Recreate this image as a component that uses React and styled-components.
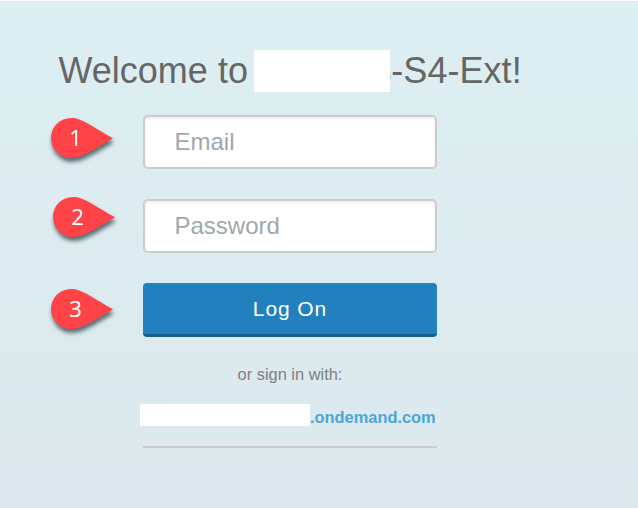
import React from "react";
import styled, { createGlobalStyle } from "styled-components";

const GlobalStyle = createGlobalStyle`
  * { box-sizing: border-box; }
  body { margin: 0; font-family: "Liberation Sans", Arial, sans-serif; }
`;

const Page = styled.main`
  height: 508px;
  overflow: hidden;
  border-top: 1px solid #fff;
  background: linear-gradient(#dceff2, #dce8ed);
`;

const Title = styled.h1`
  display: flex;
  align-items: center;
  height: 42px;
  margin: 49px 0 0 58.5px;
  font-size: 36px;
  font-weight: 400;
  line-height: 42px;
  color: #666;
  white-space: pre;
`;

const Redaction = styled.span`
  flex: none;
  width: ${({ $width }) => $width}px;
  height: ${({ $height }) => $height}px;
  background: #fff;
`;

const TitleRedaction = styled(Redaction)`
  margin: 0 0 0 6.4px;
`;

const HiddenNameEdge = styled.span`
  width: 1px;
  height: 4px;
  margin-top: 12px;
  background: #9bc9e8;
`;

const TitleSuffix = styled.span`
  letter-spacing: 0.05px;
`;

const Form = styled.form`
  display: flex;
  flex-direction: column;
  gap: 30px;
  margin-top: 23px;
`;

const FormRow = styled.div`
  display: grid;
  grid-template-columns: 143px 294px;
  height: 54px;
`;

const Marker = styled.svg`
  display: block;
  width: 76px;
  height: 54px;
  margin: ${({ $top }) => $top}px 0 0 ${({ $left }) => $left}px;
  overflow: visible;
  filter: drop-shadow(1px 4px 2px rgba(20, 40, 45, 0.65));
`;

const MarkerLabel = styled.text`
  font: 22px "Open Sans", "Noto Sans", sans-serif;
  fill: #fff;
  stroke: #fff;
  stroke-width: 0.2px;
  text-anchor: middle;
`;

const Field = styled.input`
  width: 100%;
  height: 54px;
  padding: 0 29.5px;
  border: 2px solid #ccc;
  border-radius: 5px;
  outline: 0;
  background: #fff;
  box-shadow: inset 0 2px 3px rgba(0, 0, 0, 0.07);
  font: 24px "Liberation Sans", Arial, sans-serif;
  &::placeholder { color: #a0a8ab; opacity: 1; }
`;

const LogOnButton = styled.button`
  height: 54px;
  padding: 0;
  border: 0;
  border-bottom: 3px solid #1b608c;
  border-radius: 4px;
  background: #2380be;
  color: #fff;
  font: 21px "Liberation Sans", Arial, sans-serif;
  letter-spacing: 0.9px;
`;

const SignInOptions = styled.section`
  width: 297px;
  margin: 27px 0 0 140px;
`;

const Hint = styled.p`
  width: 294px;
  margin: 0 0 0 3px;
  font-size: 16.4px;
  line-height: 20px;
  text-align: center;
  color: #808080;
`;

const Provider = styled.a`
  display: flex;
  height: 22px;
  margin-top: 20px;
  font-size: 16.4px;
  font-weight: 700;
  line-height: 27px;
  color: #4ba6d8;
  text-decoration: none;
`;

const Divider = styled.hr`
  height: 2px;
  margin: 20px 0 0 3px;
  border: 0;
  background: #ccc;
`;

function StepMarker({ step, left = 51, top = 3 }) {
  return (
    <Marker viewBox="0 0 76 54" $left={left} $top={top} aria-hidden="true">
      <path
        d="M20 0C31 0 40 8 62 20.3C44 31 31 40 20 40A20 20 0 0 1 20 0Z"
        fill="#ff4346"
      />
      <MarkerLabel x="24.5" y="28">{step}</MarkerLabel>
    </Marker>
  );
}

export default function App() {
  return (
    <>
      <GlobalStyle />
      <Page>
        <Title>
          Welcome to
          <TitleRedaction $width={136} $height={42} />
          <HiddenNameEdge />
          <TitleSuffix>-S4-Ext!</TitleSuffix>
        </Title>
        <Form onSubmit={(event) => event.preventDefault()}>
          <FormRow>
            <StepMarker step="1" />
            <Field type="email" placeholder="Email" aria-label="Email" />
          </FormRow>
          <FormRow>
            <StepMarker step="2" left={53} top={-2} />
            <Field type="password" placeholder="Password" aria-label="Password" />
          </FormRow>
          <FormRow>
            <StepMarker step="3" top={6} />
            <LogOnButton type="submit">Log On</LogOnButton>
          </FormRow>
        </Form>
        <SignInOptions>
          <Hint>or sign in with:</Hint>
          <Provider href="#">
            <Redaction $width={170} $height={22} />
            .ondemand.com
          </Provider>
          <Divider />
        </SignInOptions>
      </Page>
    </>
  );
}
